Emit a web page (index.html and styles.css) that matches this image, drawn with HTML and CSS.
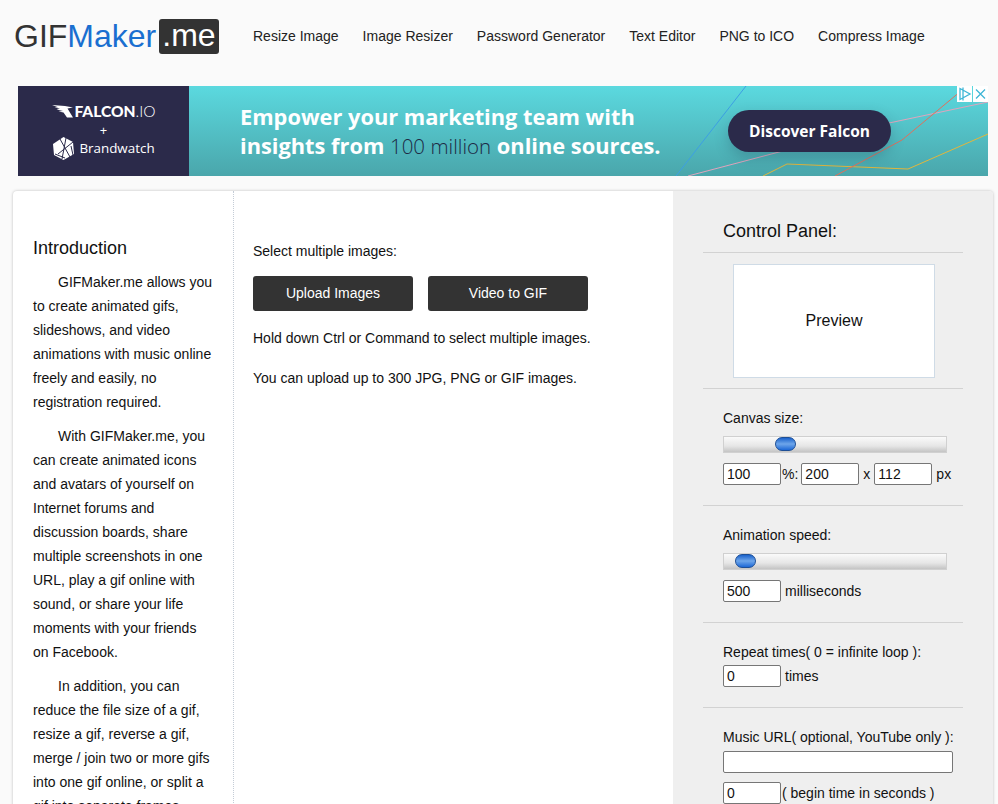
FILE: index.html
```html
<!DOCTYPE html>
<html lang="en">
<head>
<meta charset="utf-8">
<title>GIFMaker.me</title>
<link rel="stylesheet" href="styles.css">
</head>
<body>
<header class="top">
  <a class="logo"><span class="gif">GIF</span><span class="maker">Maker</span><span class="me">.me</span></a>
  <nav class="nav">
    <a>Resize Image</a><a>Image Resizer</a><a>Password Generator</a><a>Text Editor</a><a>PNG to ICO</a><a>Compress Image</a>
  </nav>
</header>
<section class="ad">
  <div class="ad-left">
    <div class="falcon">
      <svg class="wing" viewBox="0 0 21 13" width="21" height="13"><path d="M0 0 L13 1 L21 2.5 L15.5 3.5 L21 12.5 L15 12.5 L11.5 7.5 L6.5 6.5 L11 6 L4.5 4.5 L8 3.8 L2.5 2.5 L6 2.2 Z" fill="#fff"/></svg>
      <span class="falcon-name">FALCON<span class="io">.IO</span></span>
    </div>
    <div class="plus">+</div>
    <div class="brand">
      <svg class="hex" viewBox="0 0 21 23" width="21" height="23"><path d="M10.5 0 L20 5 L21 17 L10.5 23 L1 18 L0 7 Z" fill="#fff"/><path d="M7 2 L17 20 M20 5 L5 17 M2 17 L12 21 M13 1 L9 22 M18 9 L20 18" stroke="#2b2a4a" stroke-width="1" fill="none"/></svg>
      <span class="brand-name">Brandwatch</span>
    </div>
  </div>
  <div class="ad-right">
    <svg class="lines" viewBox="0 0 799 90">
      <path d="M557 0 L487 90" stroke="#3d9fe3" stroke-width="1" fill="none"/>
      <path d="M499 90 L700 37 L799 16" stroke="#e0a4bc" stroke-width="1" fill="none"/>
      <path d="M574 90 L598 78 L719 83 L799 48" stroke="#e2b63c" stroke-width="1" fill="none"/>
      <path d="M646 90 L713 54 L778 0" stroke="#e0705c" stroke-width="1" fill="none"/>
    </svg>
    <p class="ad-copy">Empower your marketing team with<br>insights from <span class="thin">100 million</span> online sources.</p>
    <a class="ad-cta">Discover Falcon</a>
    <div class="ad-badges">
      <span class="badge"><svg viewBox="0 0 15 16" width="15" height="16"><path d="M3 2.5 V13.5 L13 8 Z M6 1.5 V14.5" stroke="#3fb6d6" stroke-width="1.3" fill="none"/></svg></span>
      <span class="badge"><svg viewBox="0 0 15 16" width="15" height="16"><path d="M3 3.5 L12 12.5 M12 3.5 L3 12.5" stroke="#3fb6d6" stroke-width="1.3" fill="none"/></svg></span>
    </div>
  </div>
</section>
<main class="card">
  <aside class="intro">
    <h2 class="intro-title">Introduction</h2>
    <p>GIFMaker.me allows you to create animated gifs, slideshows, and video animations with music online freely and easily, no registration required.</p>
    <p>With GIFMaker.me, you can create animated icons and avatars of yourself on Internet forums and discussion boards, share multiple screenshots in one URL, play a gif online with sound, or share your life moments with your friends on Facebook.</p>
    <p>In addition, you can reduce the file size of a gif, resize a gif, reverse a gif, merge / join two or more gifs into one gif online, or split a gif into separate frames.</p>
  </aside>
  <section class="upload">
    <p class="select">Select multiple images:</p>
    <div class="buttons">
      <a class="btn btn-upload">Upload Images</a>
      <a class="btn btn-video">Video to GIF</a>
    </div>
    <p class="hint">Hold down Ctrl or Command to select multiple images.</p>
    <p class="hint">You can upload up to 300 JPG, PNG or GIF images.</p>
  </section>
  <aside class="panel">
    <h2 class="panel-title">Control Panel:</h2>
    <div class="group group-preview"><div class="preview">Preview</div></div>
    <div class="group">
      <div class="label">Canvas size:</div>
      <div class="slider"><span class="knob knob-canvas"></span></div>
      <div class="row"><input class="num" value="100"><span class="pct">%:</span><input class="num" value="200"><span class="x">x</span><input class="num" value="112"><span class="unit">px</span></div>
    </div>
    <div class="group">
      <div class="label">Animation speed:</div>
      <div class="slider"><span class="knob knob-speed"></span></div>
      <div class="row"><input class="num" value="500"><span class="unit">milliseconds</span></div>
    </div>
    <div class="group group-repeat">
      <div class="label">Repeat times( 0 = infinite loop ):</div>
      <div class="row"><input class="num" value="0"><span class="unit">times</span></div>
    </div>
    <div class="group group-music">
      <div class="label">Music URL( optional, YouTube only ):</div>
      <input class="wide">
      <div class="row row-begin"><input class="num" value="0"><span class="begin">( begin time in seconds )</span></div>
    </div>
  </aside>
</main>
</body>
</html>
```
FILE: styles.css
```css
html, body { margin: 0; padding: 0; height: 804px; overflow: hidden; }
body { background: #fafafa; font-family: "Liberation Sans", Arial, sans-serif; color: #111; }
.top { display: flex; align-items: flex-start; height: 86px; padding-left: 14px; box-sizing: border-box; }
.logo { display: flex; align-items: center; margin-top: 19px; font-size: 32px; line-height: 35px; height: 35px; width: 239px; flex: none; }
.gif { color: #333; }
.maker { color: #1a6fd0; }
.me { background: #333; color: #fff; border-radius: 3px; padding: 0 3px; margin-left: 3px; height: 35px; line-height: 33px; }
.nav { display: flex; gap: 24px; margin-top: 28px; font-size: 14px; line-height: 17px; color: #222; }
.ad { display: flex; height: 90px; margin-left: 18px; width: 970px; }
.ad-left { width: 171px; flex: none; background: #2b2a4a; color: #fff; display: flex; flex-direction: column; align-items: center; padding-top: 17px; box-sizing: border-box; }
.falcon { display: flex; align-items: center; height: 16px; }
.wing { margin-right: 2px; }
.falcon-name { font-family: Lato, sans-serif; font-weight: 900; font-size: 15.5px; line-height: 16px; }
.io { font-weight: 300; }
.plus { font-size: 13px; line-height: 17px; font-family: "Open Sans", sans-serif; margin-top: 3px; }
.brand { display: flex; align-items: center; gap: 5px; height: 24px; margin-top: -3px; margin-left: 1px; }
.brand-name { font-family: "Open Sans", sans-serif; font-size: 13.4px; }
.ad-right { position: relative; flex: 1; background: linear-gradient(#5bd9df, #4aa6ab); overflow: hidden; }
.lines { position: absolute; left: 0; top: 0; width: 799px; height: 90px; }
.ad-copy { position: absolute; left: 51px; top: 16px; margin: 0; font-family: "Open Sans", sans-serif; font-weight: 700; font-size: 21.8px; line-height: 29px; color: #fff; white-space: nowrap; }
.thin { font-weight: 300; font-size: 20.5px; color: #1d2a45; }
.ad-cta { position: absolute; left: 539px; top: 24px; width: 163px; height: 42px; border-radius: 21px; background: #2b2a4a; color: #fff; font-family: "Open Sans", sans-serif; font-weight: 700; font-size: 15.5px; line-height: 42px; text-align: center; box-shadow: 0 6px 14px rgba(30, 60, 80, .25); }
.ad-badges { position: absolute; right: 0; top: 0; display: flex; gap: 1px; }
.badge { width: 15px; height: 16px; background: #fff; display: block; line-height: 0; }
.card { display: flex; margin: 15px 5px 0 13px; height: 700px; background: #fff; border-radius: 4px 4px 0 0; box-shadow: 0 0 3px rgba(0, 0, 0, .25); overflow: hidden; }
.intro { width: 221px; flex: none; box-sizing: border-box; padding: 46px 20px 0 20px; border-right: 1px dotted #c4ccd6; font-size: 14px; line-height: 24px; }
.intro-title { margin: 0 0 11px; font-size: 18px; line-height: 22px; font-weight: 400; }
.intro p { margin: 0 0 10px; text-indent: 25px; }
.upload { flex: 1; padding: 48px 0 0 19px; font-size: 14px; line-height: 24px; }
.select { margin: 0 0 13px; }
.buttons { display: flex; gap: 15px; margin-bottom: 15px; }
.btn { display: block; height: 35px; line-height: 35px; border-radius: 3px; background: #333; color: #fff; text-align: center; }
.btn-upload { width: 160px; }
.btn-video { width: 160px; }
.hint { margin: 0 0 16px; }
.panel { width: 320px; flex: none; background: #efefef; box-sizing: border-box; padding: 0 30px; font-size: 14px; }
.panel-title { margin: 29px 0 0; padding: 0 20px 9px; font-size: 18px; line-height: 23px; font-weight: 400; border-bottom: 1px solid #d2d2d2; }
.group { padding: 20px 10px 20px 20px; border-bottom: 1px solid #d2d2d2; }
.group-preview { padding: 11px 30px 10px; }
.preview { width: 200px; height: 112px; border: 1px solid #cfdbe6; background: #fff; font-size: 16px; line-height: 112px; text-align: center; }
.label { line-height: 18px; margin-bottom: 9px; white-space: nowrap; }
.slider { position: relative; width: 224px; height: 17px; background: linear-gradient(#fafafa, #e6e6e6 60%, #c4c4c4); margin-bottom: 10px; box-sizing: border-box; border: 1px solid #d0d0d0; }
.knob { position: absolute; top: 0; width: 21px; height: 14px; box-sizing: border-box; border: 1px solid #1d4f96; border-radius: 7px; background: linear-gradient(#1a62cc, #6ea6ea 50%, #1d68d6); }
.knob-canvas { left: 51px; }
.knob-speed { left: 11px; }
.row { display: flex; align-items: center; height: 22px; }
.num { width: 58px; height: 22px; box-sizing: border-box; border: 1px solid #767676; border-radius: 2px; background: #fff; font: 14px "Liberation Sans", Arial, sans-serif; padding: 0 3px; color: #111; }
.pct { margin: 0 3px 0 1px; }
.x { margin: 0 4px; }
.unit { margin-left: 4px; }
.group-repeat .label { margin-bottom: 4px; }
.group-music .label { margin-bottom: 5px; }
.wide { display: block; width: 230px; height: 22px; box-sizing: border-box; border: 1px solid #767676; border-radius: 2px; background: #fff; padding: 0; }
.row-begin { margin-top: 9px; }
.begin { margin-left: 1px; }
```
